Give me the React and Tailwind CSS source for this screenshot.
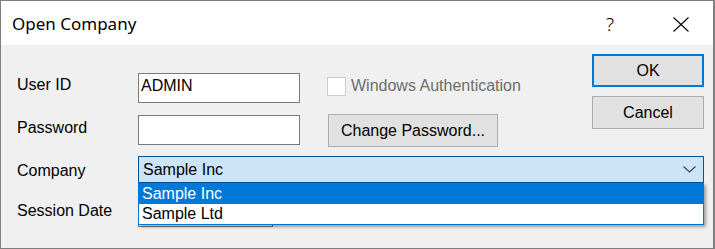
import React from "react";

const sans = { fontFamily: '"Liberation Sans", Arial, sans-serif' };

export default function App() {
  return (
    <div className="w-[715px] h-[249px] bg-white">
      <div
        className="w-[715px] h-[249px] flex flex-col border-l border-t border-b border-r-2 border-[#7f7f7f] overflow-hidden"
        style={sans}
      >
        {/* Title bar */}
        <div className="h-[44px] shrink-0 bg-white flex items-start">
          <div
            className="pl-[11px] pt-[11px] text-[17px] leading-[23px] text-black"
            style={{ fontFamily: '"Noto Sans", "Open Sans", sans-serif' }}
          >
            Open Company
          </div>
          <div
            className="ml-auto pt-[11px] mr-[59px] text-[19px] leading-[25px] text-black"
            style={{ fontFamily: '"Noto Sans", sans-serif', fontWeight: 300 }}
          >
            ?
          </div>
          <div className="pt-[16px] mr-[24px]">
            <svg width="16" height="15" viewBox="0 0 16 15">
              <path d="M0.5 0.5 L15.5 14.5 M15.5 0.5 L0.5 14.5" stroke="#000" strokeWidth="1.1" fill="none" />
            </svg>
          </div>
        </div>

        {/* Body */}
        <div className="relative flex-1 bg-[#f0f0f0] text-[16px] leading-[18px] text-black">
          <div className="flex">
            <div className="flex flex-col pl-[16px] pt-[28px]">
              {/* Row 1 */}
              <div className="flex h-[30px] items-start">
                <div className="w-[121px] pt-[3px]">User ID</div>
                <div className="w-[162px] h-[30px] border border-[#7a7a7a] bg-white pl-[2px] pt-[3px]">ADMIN</div>
                <div className="ml-[27px] mt-[4px] w-[19px] h-[19px] border border-[#cccccc] bg-white" />
                <div className="ml-[5px] pt-[4px] text-[#6d6d6d]">Windows Authentication</div>
              </div>
              {/* Row 2 */}
              <div className="flex h-[33px] items-start mt-[11px]">
                <div className="w-[121px] pt-[5px]">Password</div>
                <div className="w-[162px] h-[30px] mt-[1px] border border-[#7a7a7a] bg-white" />
                <div className="ml-[28px] w-[170px] h-[33px] border border-[#adadad] bg-[#e1e1e1] flex items-center justify-center">
                  Change Password...
                </div>
              </div>
            </div>
            <div className="ml-auto mr-[9px] pt-[9px] flex flex-col gap-[9px]">
              <div className="w-[112px] h-[33px] border-2 border-[#0078d7] bg-[#e1e1e1] flex items-center justify-center">
                OK
              </div>
              <div className="w-[112px] h-[33px] border border-[#adadad] bg-[#e1e1e1] flex items-center justify-center">
                Cancel
              </div>
            </div>
          </div>

          {/* Company row */}
          <div className="flex items-start pl-[16px] mt-[9px] h-[27px]">
            <div className="w-[121px] pt-[6px]">Company</div>
            <div className="w-[566px] h-[27px] border border-[#005499] bg-[#cce4f7] flex items-start">
              <div className="pl-[4px] pt-[4px]">Sample Inc</div>
              <div className="ml-auto mr-[7px] mt-[9px]">
                <svg width="13" height="7" viewBox="0 0 13 7">
                  <path d="M0.5 0.5 L6.5 6 L12.5 0.5" stroke="#404040" strokeWidth="1.1" fill="none" />
                </svg>
              </div>
            </div>
          </div>

          {/* Session date row */}
          <div className="flex items-start pl-[16px] mt-[14px] h-[30px]">
            <div className="w-[121px] pt-[5px]">Session Date</div>
            <div className="w-[135px] h-[30px] border border-[#7a7a7a] bg-white" />
          </div>

          {/* Dropdown overlay */}
          <div className="absolute left-[137px] top-[138px] w-[566px] border-x border-b border-[#0078d7] bg-white shadow-[2px_2px_3px_rgba(0,0,0,0.35)]">
            <div className="h-[21px] bg-[#0078d7] text-white pl-[3px] pt-[2px]">Sample Inc</div>
            <div className="h-[20px] text-black pl-[3px] pt-[1px]">Sample Ltd</div>
          </div>
        </div>
      </div>
    </div>
  );
}
